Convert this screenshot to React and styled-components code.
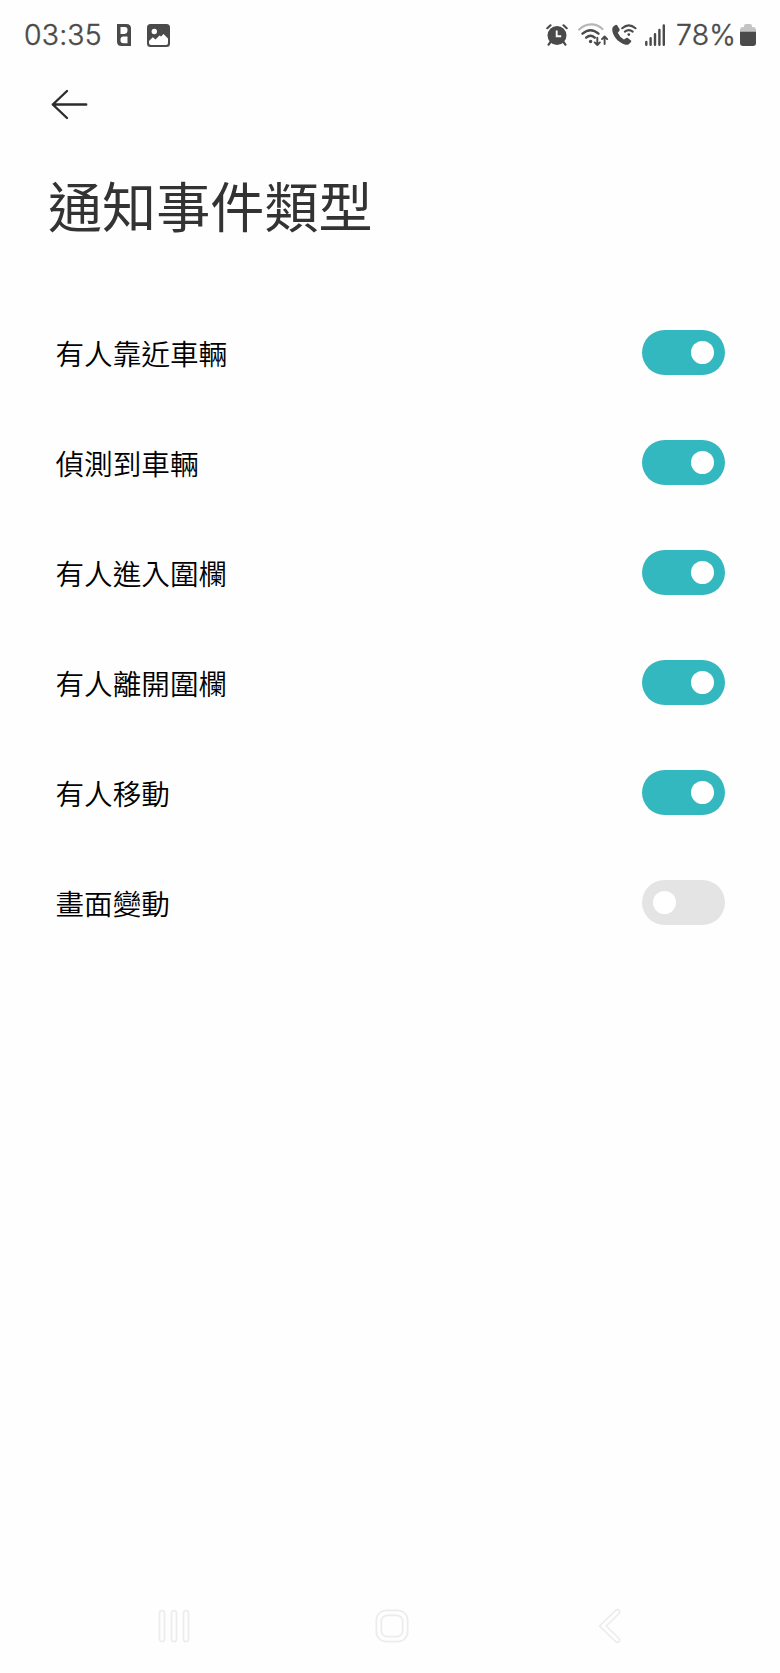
import React, { useState } from 'react'
import styled, { createGlobalStyle } from 'styled-components'

const GlobalStyle = createGlobalStyle`
	body {
		margin: 0;
		background: #fefefe;
	}
`

const Screen = styled.div`
	width: 780px;
	height: 1673px;
	display: flex;
	flex-direction: column;
	overflow: hidden;
	background: #fefefe;
	font-family: "Noto Sans CJK TC", sans-serif;
`

const StatusBar = styled.div`
	height: 70px;
	display: flex;
	align-items: center;
	justify-content: space-between;
	padding: 0 24px 0 24px;
	box-sizing: border-box;
	color: #4a4a4a;
`

const StatusGroup = styled.div`
	display: flex;
	align-items: center;
`

const StatusText = styled.span`
	flex: none;
	font-family: Inter, sans-serif;
	font-size: 28.4px;
	font-weight: 300;
	-webkit-text-stroke: 0.4px currentColor;
	line-height: 34px;
	letter-spacing: 0.2px;
	margin-left: ${props => props.$gap || 0}px;
	width: ${props => props.$width}px;
	white-space: nowrap;
`

const Icon = styled.svg`
	display: block;
	flex: none;
	margin-left: ${props => props.$gap || 0}px;
`

const Header = styled.header`
	height: 70px;
	display: flex;
	align-items: center;
	padding-left: 50px;
`

const BackButton = styled.button`
	border: none;
	padding: 0;
	background: none;
	cursor: pointer;
`

const Title = styled.h1`
	margin: 25px 0 0 48px;
	font-size: 54.1px;
	font-weight: 400;
	line-height: 80px;
	color: #333;
`

const List = styled.div`
	flex: 1;
	padding: 52.5px 55px 0 55.5px;
`

const Row = styled.div`
	height: 110px;
	display: flex;
	align-items: center;
	justify-content: space-between;
`

const Label = styled.span`
	font-size: 28.6px;
	font-weight: 350;
	line-height: 42px;
	color: #000;
`

const Toggle = styled.button`
	width: 83.4px;
	height: 45.5px;
	display: flex;
	align-items: center;
	justify-content: ${props => props.$on ? 'flex-end' : 'flex-start'};
	padding: 0 11px;
	border: none;
	border-radius: 23px;
	background: ${props => props.$on ? '#34b8c0' : '#e4e4e4'};
	cursor: pointer;
`

const Knob = styled.span`
	width: 23px;
	height: 23px;
	border-radius: 50%;
	background: #fff;
`

const NavBar = styled.nav`
	height: 94px;
	display: flex;
	align-items: center;
	padding-left: 157px;
`

const AppIcon = () => (
	<Icon width="14" height="22" viewBox="0 0 14 22" $gap={16}>
		<path fillRule="evenodd" fill="currentColor" d="M0 0H9.500Q14 0 14 4.500V22H4.500Q0 22 0 17.500ZM3.500 3V10H7.500Q10.500 9.500 10.500 6.500V5.500Q10.500 3 8 3ZM6.500 12.500Q3.500 12.700 3.500 15.500V16.500Q3.500 19.300 6.500 19.300H10.500V12.500Z" />
	</Icon>
)

const GalleryIcon = () => (
	<Icon width="23" height="23" viewBox="0 0 23 23" $gap={16}>
		<rect width="23" height="23" rx="3.500" fill="currentColor" />
		<circle cx="7.300" cy="7.500" r="2.700" fill="#fefefe" />
		<path d="M2 17L5.800 13.200L8.500 15.500L12.500 11.500L14 12.500L16.500 10L21 14.500V19Q21 21 19 21H4Q2 21 2 19Z" fill="#fefefe" />
	</Icon>
)

const AlarmIcon = () => (
	<Icon width="22" height="22" viewBox="0 0 22 22">
		<g stroke="currentColor" strokeLinecap="round" fill="none">
			<path d="M1.300 4.200L4.500 1.300M20.700 4.200L17.500 1.300" strokeWidth="2.200" />
			<path d="M4.500 18L2.600 20.700M17.500 18L19.400 20.700" strokeWidth="2.200" />
		</g>
		<circle cx="11" cy="11.500" r="9.500" fill="currentColor" />
		<path d="M10.700 6.500V12.300H15.200" stroke="#fefefe" strokeWidth="1.900" fill="none" />
	</Icon>
)

const WifiIcon = () => (
	<Icon width="31" height="24" viewBox="0 0 31 24" $gap={10}>
		<g stroke="currentColor" strokeLinecap="round" strokeLinejoin="round" fill="none">
			<path d="M1.200 6.500C8 -.300 18 -.300 24.500 6" strokeWidth="2.200" opacity=".4" />
			<path d="M4.500 10.700Q12.500 3.700 20.500 10.700" strokeWidth="2.400" />
			<path d="M8.200 14.700Q12.500 11 16.800 14.700" strokeWidth="2.400" />
			<path d="M19.300 14.800V22M16.700 19.400L19.300 22L21.900 19.400" strokeWidth="1.900" />
			<path d="M26.600 21V13.500M24 16.100L26.600 13.500L29.200 16.100" strokeWidth="1.900" />
		</g>
		<circle cx="12.600" cy="18.500" r="1.700" fill="currentColor" />
	</Icon>
)

const CallIcon = () => (
	<Icon width="25" height="22" viewBox="0 0 25 22" $gap={3}>
		<path fill="currentColor" d="M1.500 2.300L3.500 .900Q4.500 .400 5.200 1.300L7.600 5.200Q8 6 7.400 6.800L5.800 8.700Q7.500 12.800 12 15.600L14.200 13.900Q15 13.400 15.800 13.900L19 16.400Q19.800 17.200 19 18L17 20Q15.800 21.200 13.500 20.700C6 18.500 .500 12 .200 5.500Q.200 3.500 1.500 2.300Z" />
		<g stroke="currentColor" strokeWidth="2.100" strokeLinecap="round" fill="none">
			<path d="M10.200 4.200Q16.800 -1.500 23.500 4.200" />
			<path d="M12.900 7.700Q16.800 4.700 20.700 7.700" />
		</g>
		<circle cx="16.800" cy="10.600" r="1.400" fill="currentColor" />
	</Icon>
)

const SignalIcon = () => (
	<Icon width="21" height="22" viewBox="0 0 21 22" $gap={8}>
		<path d="M1.300 18V20.700M5.600 14.300V20.700M10 10.300V20.700M14.400 6V20.700M18.800 1.500V20.700" stroke="currentColor" strokeWidth="2.400" strokeLinecap="round" />
	</Icon>
)

const BatteryIcon = () => (
	<Icon width="16" height="22" viewBox="0 0 16 22">
		<path d="M4 2Q4 0 6 0H10Q12 0 12 2V3H13Q16 3 16 6V8H0V6Q0 3 3 3H4Z" fill="#c4c4c4" />
		<path d="M0 7.700H16V19Q16 22 13 22H3Q0 22 0 19Z" fill="currentColor" />
	</Icon>
)

const ArrowIcon = () => (
	<Icon width="38" height="32" viewBox="0 0 38 32">
		<path d="M17 2L2.800 15.500L17 29M2.800 15.500H36.200" fill="none" stroke="#2c2c2c" strokeWidth="2.400" strokeLinecap="round" strokeLinejoin="round" />
	</Icon>
)

const RecentsIcon = () => (
	<Icon width="34" height="36" viewBox="0 0 34 36" fill="none" stroke="#ececec" strokeWidth="1.700">
		<rect x="2.500" y="2.500" width="5" height="31" rx="2.500" />
		<rect x="14.500" y="2.500" width="5" height="31" rx="2.500" />
		<rect x="26.500" y="2.500" width="5" height="31" rx="2.500" />
	</Icon>
)

const HomeIcon = () => (
	<Icon width="36" height="36" viewBox="0 0 36 36" fill="none" stroke="#ececec" strokeWidth="1.700" $gap={183}>
		<rect x="2.300" y="2.300" width="31.400" height="31.400" rx="10" />
		<rect x="7.300" y="7.300" width="21.400" height="21.400" rx="6" />
	</Icon>
)

const NavBackIcon = () => (
	<Icon width="26" height="38" viewBox="0 0 26 38" fill="none" stroke="#ececec" strokeWidth="1.700" strokeLinejoin="round" $gap={187}>
		<path d="M2.500 19L19 3.200Q20.500 2 22 3.300Q23.500 5 22 6.500L9.300 19L22 31.500Q23.500 33 22 34.700Q20.500 36 19 34.800Z" />
	</Icon>
)

const events = [
	{ label: '有人靠近車輛', on: true },
	{ label: '偵測到車輛', on: true },
	{ label: '有人進入圍欄', on: true },
	{ label: '有人離開圍欄', on: true },
	{ label: '有人移動', on: true },
	{ label: '畫面變動', on: false },
]

const EventRow = ({ label, initial }) => {
	const [on, setOn] = useState(initial)

	return (
		<Row>
			<Label>{label}</Label>
			<Toggle $on={on} role="switch" aria-checked={on} aria-label={label} onClick={() => setOn(!on)}>
				<Knob />
			</Toggle>
		</Row>
	)
}

const App = () => (
	<>
		<GlobalStyle />
		<Screen lang="zh-Hant">
			<StatusBar>
				<StatusGroup>
					<StatusText $width={77}>03:35</StatusText>
					<AppIcon />
					<GalleryIcon />
				</StatusGroup>
				<StatusGroup>
					<AlarmIcon />
					<WifiIcon />
					<CallIcon />
					<SignalIcon />
					<StatusText $gap={10.5} $width={64}>78%</StatusText>
					<BatteryIcon />
				</StatusGroup>
			</StatusBar>
			<Header>
				<BackButton aria-label="返回"><ArrowIcon /></BackButton>
			</Header>
			<Title>通知事件類型</Title>
			<List>
				{events.map(event => (
					<EventRow key={event.label} label={event.label} initial={event.on} />
				))}
			</List>
			<NavBar>
				<RecentsIcon />
				<HomeIcon />
				<NavBackIcon />
			</NavBar>
		</Screen>
	</>
)

export default App
